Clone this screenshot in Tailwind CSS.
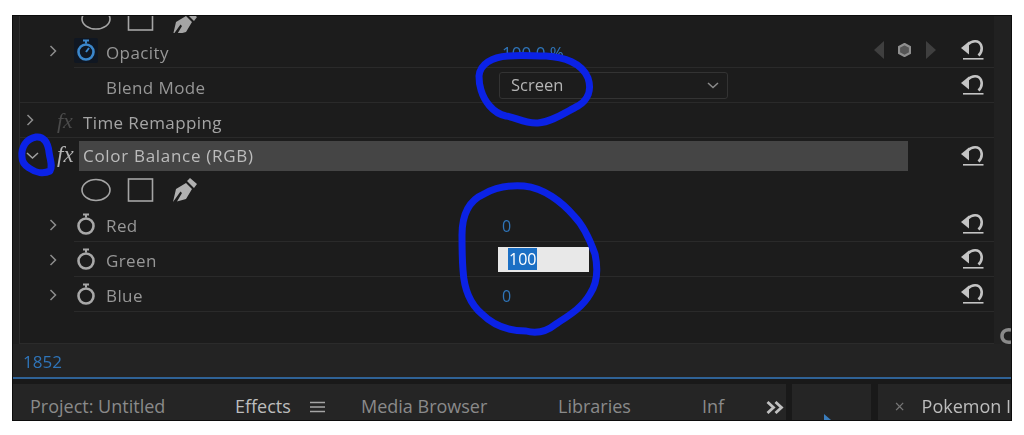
<!DOCTYPE html>
<html lang="en">
<head>
    <meta charset="UTF-8">
    <meta name="viewport" content="width=device-width, initial-scale=1.0">
    <title>Effect Controls</title>
    <script src="https://cdn.jsdelivr.net/npm/@tailwindcss/browser@4"></script>
</head>
<body class="bg-white h-[435px] overflow-hidden font-['Open_Sans',sans-serif]">
    <div class="pt-[15px] pl-[12px]">
        <div class="relative w-[1000px] h-[406px] bg-[#1c1c1c] border border-[#0c0c0c] overflow-hidden flex flex-col">
            <div class="flex h-[333px] blur-[0.5px]">
                <!-- left strip -->
                <div class="w-[7px] bg-[#1f1f1f] border-r border-[#2b2b2b]"></div>

                <!-- rows -->
                <div class="w-[974px] border-b border-[#2b2b2b]">
                    <!-- clipped shape tools -->
                    <div class="h-[17px] overflow-hidden pl-[61px] flex items-end gap-[12px]">
                        <svg class="w-[34px] h-[24px] shrink-0 mb-[2px]" viewBox="0 0 34 24"><ellipse cx="15" cy="12" rx="14" ry="10" fill="none" stroke="#a5a5a5" stroke-width="1.6"/></svg>
                        <svg class="w-[28px] h-[24px] shrink-0 mb-[2px]" viewBox="0 0 28 24"><rect x="1.5" y="1" width="24" height="22" fill="none" stroke="#a5a5a5" stroke-width="1.6"/></svg>
                        <svg class="w-[26px] h-[26px] shrink-0 mb-[-3px] ml-[5px]" viewBox="0 0 26 26"><path d="M1 25 4 12 14 6 20 12 14 22 5 24.5 10 16 8.5 14.5Z M15 4 18 1 25 7 22 11Z" fill="#a5a5a5"/></svg>
                    </div>

                    <!-- Opacity -->
                    <div class="flex h-[35px] items-center pl-[29px]">
                        <svg class="w-[8px] h-[12px] shrink-0 mr-[17px]" viewBox="0 0 8 12"><path d="M1.5 1 6.500 6l-5 5" fill="none" stroke="#8d8d8d" stroke-width="1.500"/></svg>
                        <div class="flex flex-1 h-full items-center border-b border-[#2a2a2a]">
                            <div class="w-[32px] h-full flex items-center">
                                <div class="w-[24px] h-[25px] bg-[#101722] rounded-[2px] flex items-center justify-center">
                                    <svg class="w-[20px] h-[23px]" viewBox="0 0 20 23"><circle cx="10" cy="13" r="7.500" fill="none" stroke="#3b87cc" stroke-width="2.600"/><path d="M7 1.500h6M10 1.500v3M10 13l3-4" fill="none" stroke="#3b87cc" stroke-width="2"/></svg>
                                </div>
                            </div>
                            <span class="w-[396px] pt-[5px] text-[17px] text-[#979797] tracking-[0.4px]">Opacity</span>
                            <span class="w-[372px] pt-[5px] text-[17px] text-[#2f74b8]">100.0 %</span>
                            <div class="w-[87px] flex items-center">
                                <svg class="w-[10px] h-[18px]" viewBox="0 0 10 18"><path d="M10 0v18L0 9Z" fill="#3f3f3f"/></svg>
                                <svg class="w-[13px] h-[14px] ml-[14px]" viewBox="0 0 13 14"><path d="M6.500 1 12 4v6l-5.500 3L1 10V4Z" fill="#555" stroke="#8f8f8f" stroke-width="2.200"/></svg>
                                <svg class="w-[10px] h-[18px] ml-[15px]" viewBox="0 0 10 18"><path d="M0 0v18l10-9Z" fill="#3f3f3f"/></svg>
                            </div>
                            <svg class="w-[23px] h-[22px] mb-[2px]" viewBox="0 0 23 22"><path d="M0 10 8 3.500V16.500Z" fill="#c4c4c4"/><path d="M7 6.500C11 2 18 2 20 7 21.500 11 20 15 17.500 17.500" fill="none" stroke="#c4c4c4" stroke-width="2.600"/><path d="M2 20.800h20.500" stroke="#c4c4c4" stroke-width="1.600"/></svg>
                        </div>
                    </div>

                    <!-- Blend Mode -->
                    <div class="flex h-[35px] items-center border-b border-[#2a2a2a]">
                        <span class="pl-[86px] w-[479px] pt-[5px] text-[17px] text-[#979797] tracking-[0.4px]">Blend Mode</span>
                        <div class="w-[229px] h-[27px] border border-[#333333] rounded-[3px] flex items-center justify-between pl-[11px] pr-[8px] text-[16.5px] text-[#b5b5b5]">
                            <span>Screen</span>
                            <svg class="w-[12px] h-[7px]" viewBox="0 0 12 7"><path d="M1 1l5 4.500L11 1" fill="none" stroke="#8a8a8a" stroke-width="1.500"/></svg>
                        </div>
                        <svg class="w-[23px] h-[22px] ml-[233px] mb-[2px]" viewBox="0 0 23 22"><path d="M0 10 8 3.500V16.500Z" fill="#c4c4c4"/><path d="M7 6.500C11 2 18 2 20 7 21.500 11 20 15 17.500 17.500" fill="none" stroke="#c4c4c4" stroke-width="2.600"/><path d="M2 20.800h20.500" stroke="#c4c4c4" stroke-width="1.600"/></svg>
                    </div>

                    <!-- Time Remapping -->
                    <div class="flex h-[35px] items-center border-b border-[#2a2a2a] pl-[6px]">
                        <svg class="w-[8px] h-[12px] shrink-0 mr-[23px]" viewBox="0 0 8 12"><path d="M1.500 1 6.500 6l-5 5" fill="none" stroke="#8d8d8d" stroke-width="1.500"/></svg>
                        <span class="w-[26px] text-[22px] italic font-['Liberation_Serif',serif] text-[#4a4a4a]">fx</span>
                        <span class="pt-[5px] text-[17px] text-[#a5a5a5] tracking-[0.4px]">Time Remapping</span>
                    </div>

                    <!-- Color Balance -->
                    <div class="flex h-[35px] items-center pl-[6px]">
                        <svg class="w-[13px] h-[8px] shrink-0 mr-[18px]" viewBox="0 0 13 8"><path d="M1 1l5.500 5L12 1" fill="none" stroke="#a0a0a0" stroke-width="1.500"/></svg>
                        <span class="w-[22px] text-[23px] italic font-['Liberation_Serif',serif] text-[#b5b5b5]">fx</span>
                        <div class="w-[829px] h-[30px] bg-[#454545] flex items-center pl-[4px] text-[17px] text-[#bcbcbc] tracking-[0.7px]">Color Balance (RGB)</div>
                        <svg class="w-[23px] h-[22px] ml-[53px] mb-[2px]" viewBox="0 0 23 22"><path d="M0 10 8 3.500V16.500Z" fill="#c4c4c4"/><path d="M7 6.500C11 2 18 2 20 7 21.500 11 20 15 17.500 17.500" fill="none" stroke="#c4c4c4" stroke-width="2.600"/><path d="M2 20.800h20.500" stroke="#c4c4c4" stroke-width="1.600"/></svg>
                    </div>

                    <!-- shape tools -->
                    <div class="flex h-[34px] items-center pl-[61px] gap-[12px]">
                        <svg class="w-[34px] h-[24px] shrink-0" viewBox="0 0 34 24"><ellipse cx="15" cy="12" rx="14" ry="10.500" fill="none" stroke="#a5a5a5" stroke-width="1.600"/></svg>
                        <svg class="w-[28px] h-[24px] shrink-0" viewBox="0 0 28 24"><rect x="1.500" y="1" width="24" height="22" fill="none" stroke="#a5a5a5" stroke-width="1.600"/></svg>
                        <svg class="w-[26px] h-[26px] shrink-0 ml-[5px]" viewBox="0 0 26 26"><path d="M1 25 4 12 14 6 20 12 14 22 5 24.500 10 16 8.500 14.500Z M15 4 18 1 25 7 22 11Z" fill="#b0b0b0"/></svg>
                    </div>

                    <!-- Red -->
                    <div class="flex h-[35px] items-center pl-[29px]">
                        <svg class="w-[8px] h-[12px] shrink-0 mr-[17px]" viewBox="0 0 8 12"><path d="M1.500 1 6.500 6l-5 5" fill="none" stroke="#8d8d8d" stroke-width="1.500"/></svg>
                        <div class="flex flex-1 h-full items-center border-b border-[#2a2a2a]">
                            <div class="w-[32px] flex items-center pl-[2px]">
                                <svg class="w-[20px] h-[23px]" viewBox="0 0 20 23"><circle cx="10" cy="13" r="7.500" fill="none" stroke="#a8a8a8" stroke-width="2.600"/><path d="M7 1.500h6M10 1.500v3" fill="none" stroke="#a8a8a8" stroke-width="2"/></svg>
                            </div>
                            <span class="w-[396px] pt-[4px] text-[17px] text-[#979797] tracking-[0.4px]">Red</span>
                            <span class="w-[459px] pt-[4px] text-[16px] text-[#2f74b8]">0</span>
                            <svg class="w-[23px] h-[22px] mb-[2px]" viewBox="0 0 23 22"><path d="M0 10 8 3.500V16.500Z" fill="#c4c4c4"/><path d="M7 6.500C11 2 18 2 20 7 21.500 11 20 15 17.500 17.500" fill="none" stroke="#c4c4c4" stroke-width="2.600"/><path d="M2 20.800h20.500" stroke="#c4c4c4" stroke-width="1.600"/></svg>
                        </div>
                    </div>

                    <!-- Green -->
                    <div class="flex h-[35px] items-center pl-[29px]">
                        <svg class="w-[8px] h-[12px] shrink-0 mr-[17px]" viewBox="0 0 8 12"><path d="M1.500 1 6.500 6l-5 5" fill="none" stroke="#8d8d8d" stroke-width="1.500"/></svg>
                        <div class="flex flex-1 h-full items-center border-b border-[#2a2a2a]">
                            <div class="w-[32px] flex items-center pl-[2px]">
                                <svg class="w-[20px] h-[23px]" viewBox="0 0 20 23"><circle cx="10" cy="13" r="7.500" fill="none" stroke="#a8a8a8" stroke-width="2.600"/><path d="M7 1.500h6M10 1.500v3" fill="none" stroke="#a8a8a8" stroke-width="2"/></svg>
                            </div>
                            <span class="w-[392px] pt-[4px] text-[17px] text-[#979797] tracking-[0.4px]">Green</span>
                            <div class="w-[91px] h-[25px] bg-[#e8e8e8] flex items-center pl-[10px] text-[16px]">
                                <span class="bg-[#1b6fc4] text-white leading-[22px] px-[1px]">100</span>
                            </div>
                            <svg class="w-[23px] h-[22px] ml-[372px] mb-[2px]" viewBox="0 0 23 22"><path d="M0 10 8 3.500V16.500Z" fill="#c4c4c4"/><path d="M7 6.500C11 2 18 2 20 7 21.500 11 20 15 17.500 17.500" fill="none" stroke="#c4c4c4" stroke-width="2.600"/><path d="M2 20.800h20.500" stroke="#c4c4c4" stroke-width="1.600"/></svg>
                        </div>
                    </div>

                    <!-- Blue -->
                    <div class="flex h-[35px] items-center pl-[29px]">
                        <svg class="w-[8px] h-[12px] shrink-0 mr-[17px]" viewBox="0 0 8 12"><path d="M1.500 1 6.500 6l-5 5" fill="none" stroke="#8d8d8d" stroke-width="1.500"/></svg>
                        <div class="flex flex-1 h-full items-center border-b border-[#2a2a2a]">
                            <div class="w-[32px] flex items-center pl-[2px]">
                                <svg class="w-[20px] h-[23px]" viewBox="0 0 20 23"><circle cx="10" cy="13" r="7.500" fill="none" stroke="#a8a8a8" stroke-width="2.600"/><path d="M7 1.500h6M10 1.500v3" fill="none" stroke="#a8a8a8" stroke-width="2"/></svg>
                            </div>
                            <span class="w-[396px] pt-[4px] text-[17px] text-[#979797] tracking-[0.4px]">Blue</span>
                            <span class="w-[459px] pt-[4px] text-[16px] text-[#2f74b8]">0</span>
                            <svg class="w-[23px] h-[22px] mb-[2px]" viewBox="0 0 23 22"><path d="M0 10 8 3.500V16.500Z" fill="#c4c4c4"/><path d="M7 6.500C11 2 18 2 20 7 21.500 11 20 15 17.500 17.500" fill="none" stroke="#c4c4c4" stroke-width="2.600"/><path d="M2 20.800h20.500" stroke="#c4c4c4" stroke-width="1.600"/></svg>
                        </div>
                    </div>
                </div>

                <!-- right strip, scrollbar handle is cut by the panel edge -->
                <div class="flex-1 bg-[#212121] flex items-end justify-end overflow-hidden">
                    <svg class="w-[11px] h-[16px]" viewBox="0 0 11 16"><path d="M11 2C5 1 2 4 2 8s3 7 9 6" fill="none" stroke="#8a8a8a" stroke-width="3.500"/></svg>
                </div>
            </div>

            <!-- footer -->
            <div class="h-[34px] bg-[#232323] flex items-center pl-[10px] pt-[3px] text-[17px] text-[#2f74b8] blur-[0.4px]">1852</div>
            <div class="h-[2px] bg-[#2f6296]"></div>
            <div class="h-[5px] bg-[#191919]"></div>

            <!-- tabs -->
            <div class="flex flex-1 text-[18px] text-[#8a8a8a] whitespace-nowrap blur-[0.5px]">
                <div class="w-[777px] bg-[#252525] flex pl-[17px] pt-[9px]">
                    <span class="w-[205px]">Project: Untitled</span>
                    <span class="w-[75px] text-[#bdbdbd]">Effects</span>
                    <div class="w-[51px] pt-[8px]">
                        <svg class="w-[15px] h-[12px]" viewBox="0 0 15 12"><path d="M0 1.500h15M0 6h15M0 10.500h15" stroke="#a5a5a5" stroke-width="1.600"/></svg>
                    </div>
                    <span class="w-[197px]">Media Browser</span>
                    <span class="w-[144px]">Libraries</span>
                    <span class="w-[64px]">Inf</span>
                    <div class="pt-[8px]">
                        <svg class="w-[18px] h-[13px]" viewBox="0 0 18 13"><path d="M1.500 1 7.500 6.500l-6 5.500M9.500 1l6 5.500-6 5.500" fill="none" stroke="#c0c0c0" stroke-width="2.800"/></svg>
                    </div>
                </div>
                <div class="w-[6px] bg-[#191919]"></div>
                <div class="w-[79px] bg-[#252525] flex items-end pl-[32px]">
                    <svg class="w-[7px] h-[6px]" viewBox="0 0 7 6"><path d="M0 0l7 6H0Z" fill="#3a7dbd"/></svg>
                </div>
                <div class="w-[7px] bg-[#191919]"></div>
                <div class="flex-1 bg-[#252525] flex pl-[17px] pt-[9px]">
                    <span class="w-[27px] text-[#777777]">×</span>
                    <span class="text-[#bdbdbd]">Pokemon I</span>
                </div>
            </div>

            <!-- hand drawn marks -->
            <svg class="absolute left-[-13px] top-[-16px] w-[1024px] h-[435px] pointer-events-none" viewBox="0 0 1024 435">
                <g fill="none" stroke="#0b22e6" stroke-width="7" stroke-linecap="round" stroke-linejoin="round">
                    <path d="M479 76C480 64 492 57 508 56 522 55 532 56 546 56 564 57 582 63 588 78 592 90 588 100 578 106 566 112 552 122 538 123 524 124 516 117 506 116 492 113 484 100 481 90 479 84 479 80 479 76Z"/>
                    <path d="M462 235C462 214 470 200 484 194 496 187 510 185 524 186 544 188 562 202 574 216 584 226 590 240 595 254 598 268 598 282 590 294 582 308 568 316 556 324 546 332 536 334 526 331 510 331 494 326 482 314 470 304 464 288 463 270 462 258 462 246 462 235Z"/>
                    <path d="M22 157C21 147 26 139 36 137 44 136 48 143 49 152 50 160 53 166 50 171 44 174 36 173 29 168 24 165 22 162 22 157Z"/>
                </g>
            </svg>
        </div>
    </div>
</body>
</html>
